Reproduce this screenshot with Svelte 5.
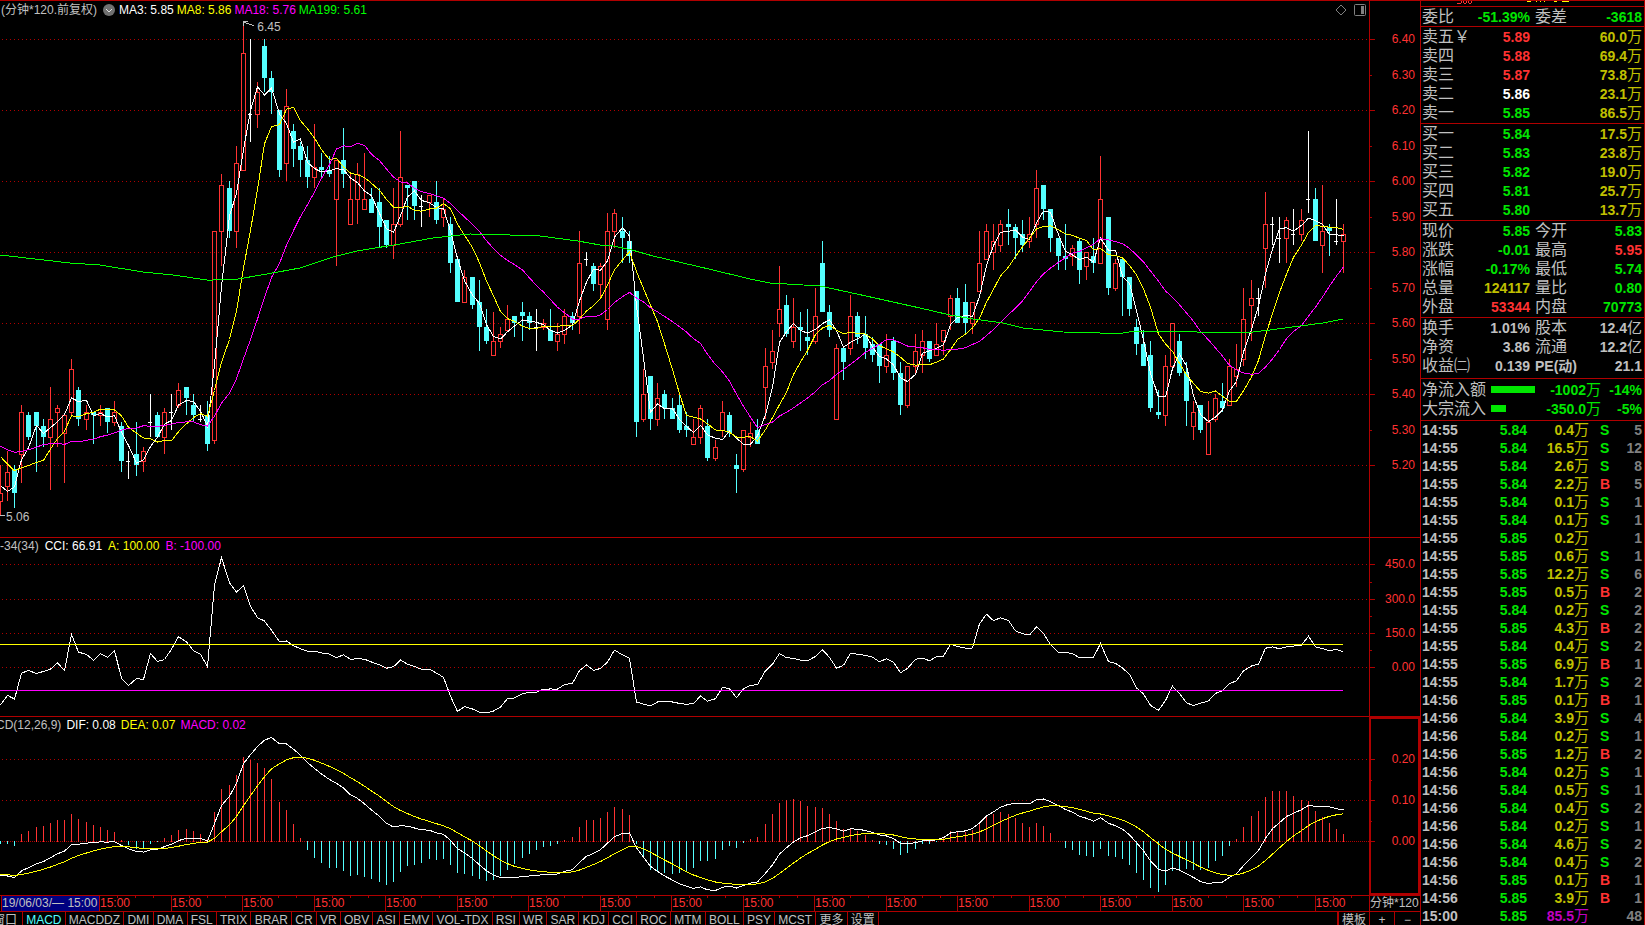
<script lang="ts">
  // open high low close, in cents, one 120-minute bar each
  const raw = `
    510 520 506 512|514 524 510 518|519 520 508 512|523 537 515 535|534 535 527 528|535 535 518 531|531 533 525 528
    528 542 513 533|535 537 525 536|529 534 515 534|535 550 534 547|541 542 531 533|533 537 530 535|535 535 526 534
    534 537 531 535|536 536 529 532|532 538 531 535|531 532 518 521|521 524 516 521|523 532 517 520|521 525 518 524
    532 540 528 532|534 535 528 528|528 536 523 535|535 540 530 535|537 543 536 541|542 542 534 539|537 540 532 534
    533 537 532 533|534 538 524 526|527 586 526 586|586 602 576 599|598 600 584 586|586 610 581 605|603 645 603 636
    619 640 611 619|619 628 615 625|638 640 625 629|629 631 619 625|620 620 601 603|605 626 600 621|614 616 604 609
    610 611 601 606|606 610 598 601|601 616 598 604|604 608 601 603|603 607 601 602|595 606 576 606|606 615 598 602
    588 602 588 595|595 605 588 602|592 608 592 595|595 598 591 591|594 598 581 587|589 589 581 582|582 598 578 588
    588 614 587 601|599 599 589 598|600 600 589 593|593 596 587 593|594 596 590 596|594 600 588 589|590 595 587 592
    588 590 574 577|578 578 566 566|566 575 566 573|573 573 564 565|566 572 552 559|559 564 554 555|551 563 551 555
    555 559 553 557|558 565 558 561|562 562 556 560|563 566 555 562|562 563 558 560|559 564 552 559|559 561 558 560
    558 564 555 555|555 560 552 557|557 564 554 562|562 563 558 560|562 586 557 577|578 580 576 578|576 577 569 571
    571 577 567 576|561 591 558 586|586 592 581 591|586 590 577 584|583 586 577 579|569 569 528 532|533 547 532 540
    545 545 530 533|533 543 531 539|540 541 533 536|536 539 533 533|537 540 529 530|531 535 528 530|526 533 526 528
    528 537 526 536|531 533 521 522|522 527 521 525|530 538 528 535|534 535 528 529|520 523 512 519|519 530 518 530
    528 532 525 529|530 533 526 526|542 553 533 548|549 558 547 552|560 576 556 564|565 568 556 557|555 567 553 559
    559 563 552 558|556 564 551 555|555 570 554 562|577 583 563 563|563 565 556 558|533 554 533 553|553 553 544 549
    553 568 551 562|562 563 554 556|557 562 550 553|554 556 549 551|554 554 543 548|548 557 546 551|555 556 544 546
    546 549 534 537|537 548 536 548|548 557 546 552|551 558 546 555|555 555 549 550|551 560 551 554|555 558 551 558
    562 568 558 567|567 570 560 560|566 571 557 560|560 566 557 566|569 586 569 577|578 588 578 586|580 588 575 583
    582 589 580 588|588 592 582 587|587 588 578 584|585 589 580 582|583 590 581 585|588 603 584 598|599 599 589 592
    592 592 580 584|584 584 575 579|579 588 575 578|579 582 576 581|583 584 571 575|576 580 572 580|579 584 574 577
    577 607 577 595|590 590 568 570|570 578 569 577|578 578 562 573|573 573 562 564|559 561 551 554|554 558 548 548
    551 555 535 536|535 541 533 534|534 551 531 548|548 560 548 560|555 557 545 546|546 549 531 538|531 538 527 535
    537 537 529 530|523 538 523 532|533 540 532 539|538 543 535 536|537 550 537 548|545 554 542 547|550 570 548 561
    565 572 555 567|567 570 562 567|581 597 570 588|588 590 582 588|584 590 577 584|584 590 577 589|585 592 582 585
    585 592 583 589|595 614 591 595|595 598 583 583|582 599 574 586|587 588 579 586|583 595 582 583|583 588 574 585`;

  const bars = raw.trim().split(/[|\n]/).map((s) => {
    const [o, h, l, c] = s.trim().split(' ').map(Number);
    return { o, h, l, c };
  });

  // closes that precede the first visible bar, needed by the averages
  const before = [535, 525, 530, 520, 518, 514, 530, 534, 539, 532, 535, 527, 528, 523, 524, 523, 508];
  const closes = [...before, ...bars.map((b) => b.c)];

  const barX = (i: number) => Math.floor(7.147 * i + 0.3);
  const priceY = (c: number) => Math.round(181 + (600 - c) * 3.55);
  const cciY = (v: number) => 667.5 - v * 0.229;
  const macdY = (v: number) => 841.5 - v * 410;

  const toPoints = (ys: number[]) => ys.map((y, i) => `${barX(i) + 0.5},${y.toFixed(1)}`).join(' ');

  function movingAverage(n: number) {
    return bars.map((_, i) => {
      const end = i + before.length + 1;
      const part = closes.slice(end - n, end);
      return part.reduce((a, b) => a + b, 0) / n;
    });
  }
  const maPoints = (n: number) => toPoints(movingAverage(n).map((v) => 181.5 + (600 - v) * 3.55));

  const ma3 = maPoints(3);
  const ma8 = maPoints(8);
  const ma18 = maPoints(18);
  const ma199 =
    '0,255 70,263 100,265 143,272 173,275 207,280 213,280 238,279 267,274 300,268 333,257 357,251 400,244 433,238 ' +
    '460,235 470,234 510,235 540,236 578,241 600,245 613,246 632,250 653,256 713,270 750,279 770,283 820,286 857,294 ' +
    '920,308 950,315 973,319 1003,323 1023,328 1063,332 1100,333 1123,333 1135,331 1167,332 1180,331 1197,332 1253,332 ' +
    '1270,330 1300,326 1323,323 1343,319';

  // the first CCI values reach further back than the bars kept here
  const cciStart = [
    -163, -122, -138, -25, -13, -26, -17, -7, 20, -13, 144, 67, 57, 32, 60, 44, 74, -47, -79, -48, -52, 61, 26, 35, 80,
    135, 112, 74, 58, 4, 360, 480, 370
  ];
  const typical = bars.map((b) => (b.h + b.l + b.c) / 3);
  const cci = bars.map((_, i) => {
    if (i < cciStart.length) return cciStart[i];
    const part = typical.slice(i - 33, i + 1);
    const mean = part.reduce((a, b) => a + b, 0) / 34;
    const dev = part.reduce((a, b) => a + Math.abs(b - mean), 0) / 34;
    return (typical[i] - mean) / (0.015 * dev);
  });
  const cciPoints = toPoints(cci.map(cciY));

  let fast = 525.9;
  let slow = 534.3;
  let signal = -8.05;
  const macd = bars.map((b, i) => {
    if (i > 0) {
      fast += ((b.c - fast) * 2) / 13;
      slow += ((b.c - slow) * 2) / 27;
      signal += ((fast - slow - signal) * 2) / 10;
    }
    const dif = (fast - slow) / 100;
    return { dif, dea: signal / 100, hist: 2 * (dif - signal / 100) };
  });
  const difPoints = toPoints(macd.map((m) => macdY(m.dif)));
  const deaPoints = toPoints(macd.map((m) => macdY(m.dea)));

  const panels = [
    {
      id: 'price', top: 1, height: 536,
      labels: Array.from({ length: 13 }, (_, k) => ({ text: ((640 - k * 10) / 100).toFixed(2), y: Math.floor(39.5 + k * 35.5), major: k % 2 === 0 })),
      minor: [] as number[]
    },
    {
      id: 'cci', top: 538, height: 178,
      labels: [
        { text: '450.0', y: 564, major: true },
        { text: '300.0', y: 599, major: true },
        { text: '150.0', y: 633, major: true },
        { text: '0.00', y: 667, major: true }
      ],
      minor: [582, 616, 650]
    },
    {
      id: 'macd', top: 717, height: 178,
      labels: [
        { text: '0.20', y: 759, major: true },
        { text: '0.10', y: 800, major: true },
        { text: '0.00', y: 841, major: true }
      ],
      minor: [780, 821]
    }
  ];

  const legends: Record<string, [string, string][]> = {
    price: [['MA3: 5.85', 'white'], ['MA8: 5.86', 'yellow'], ['MA18: 5.76', 'magenta'], ['MA199: 5.61', 'lime']],
    cci: [['CCI: 66.91', 'white'], ['A: 100.00', 'yellow'], ['B: -100.00', 'magenta']],
    macd: [['DIF: 0.08', 'white'], ['DEA: 0.07', 'yellow'], ['MACD: 0.02', 'magenta']]
  };

  const tabs = [
    'MACD', 'MACDDZ', 'DMI', 'DMA', 'FSL', 'TRIX', 'BRAR', 'CR', 'VR', 'OBV', 'ASI', 'EMV', 'VOL-TDX', 'RSI', 'WR',
    'SAR', 'KDJ', 'CCI', 'ROC', 'MTM', 'BOLL', 'PSY', 'MCST', '更多', '设置'
  ];
  let activeTab = $state('MACD');

  const asks = [
    ['卖五', '5.89', 'red', '60.0'], ['卖四', '5.88', 'red', '69.4'], ['卖三', '5.87', 'red', '73.8'],
    ['卖二', '5.86', 'white', '23.1'], ['卖一', '5.85', 'green', '86.5']
  ];
  const bids = [
    ['买一', '5.84', 'green', '17.5'], ['买二', '5.83', 'green', '23.8'], ['买三', '5.82', 'green', '19.0'],
    ['买四', '5.81', 'green', '25.7'], ['买五', '5.80', 'green', '13.7']
  ];
  const ratio = [['委比', '-51.39%', 'green', '委差', '-3618', 'green', '']];
  const quote = [
    ['现价', '5.85', 'green', '今开', '5.83', 'green', ''],
    ['涨跌', '-0.01', 'green', '最高', '5.95', 'red', ''],
    ['涨幅', '-0.17%', 'green', '最低', '5.74', 'green', ''],
    ['总量', '124117', 'gold', '量比', '0.80', 'green', ''],
    ['外盘', '53344', 'red', '内盘', '70773', 'green', '']
  ];
  const basics = [
    ['换手', '1.01%', 'grey', '股本', '12.4', 'grey', '亿'],
    ['净资', '3.86', 'grey', '流通', '12.2', 'grey', '亿'],
    ['收益㈡', '0.139', 'grey', 'PE(动)', '21.1', 'grey', '']
  ];
  const flows = [
    { name: '净流入额', bar: 44, amount: '-1002', pct: '-14%' },
    { name: '大宗流入', bar: 15, amount: '-350.0', pct: '-5%' }
  ];

  const ticks = `14:55 5.84 0.4 S 5|14:55 5.84 16.5 S 12|14:55 5.84 2.6 S 8|14:55 5.84 2.2 B 5|14:55 5.84 0.1 S 1
    14:55 5.84 0.1 S 1|14:55 5.85 0.2 - 1|14:55 5.85 0.6 S 1|14:55 5.85 12.2 S 6|14:55 5.85 0.5 B 2|14:55 5.84 0.2 S 2
    14:55 5.85 4.3 B 2|14:55 5.84 0.4 S 2|14:55 5.85 6.9 B 1|14:55 5.84 1.7 S 2|14:56 5.85 0.1 B 1|14:56 5.84 3.9 S 4
    14:56 5.84 0.2 S 1|14:56 5.85 1.2 B 2|14:56 5.84 0.2 S 1|14:56 5.84 0.5 S 1|14:56 5.84 0.4 S 2|14:56 5.84 0.2 S 1
    14:56 5.84 4.6 S 2|14:56 5.84 0.4 S 2|14:56 5.85 0.1 B 1|14:56 5.85 3.9 B 1|15:00 5.85 85.5 - 48`
    .split(/[|\n]/)
    .map((s) => s.trim().split(' '));
</script>

{#snippet pairTable(rows: string[][])}
  <table class="pairs">
    <tbody>
      {#each rows as [name, value, tone, name2, value2, tone2, unit]}
        <tr>
          <th scope="row">{name}</th>
          <td class="num {tone}">{value}</td>
          <th scope="row" class="second" class:strong={name2.startsWith('PE')}>{name2}</th>
          <td class="num {tone2}">{value2}{#if unit}<span class="unit">{unit}</span>{/if}</td>
        </tr>
      {/each}
    </tbody>
  </table>
{/snippet}

{#snippet bookTable(rows: string[][])}
  <table class="book">
    <tbody>
      {#each rows as [name, price, tone, qty]}
        <tr>
          <th scope="row">{name}{#if name === '卖五'}<span class="yen">￥</span>{/if}</th>
          <td class="num {tone}">{price}</td>
          <td class="num gold">{qty}<span class="unit">万</span></td>
        </tr>
      {/each}
    </tbody>
  </table>
{/snippet}

<div class="app">
  <main class="left">
    {#each panels as p}
      <section class="panel {p.id}">
        <div class="plot">
          <svg viewBox="0 {p.top} 1369 {p.height}" preserveAspectRatio="none" shape-rendering="crispEdges">
            {#each p.labels.filter((l) => l.major) as l}
              <line class="grid" class:zero={p.id === 'macd' && l.text === '0.00'} x1="2" x2="1369" y1={l.y + 0.5} y2={l.y + 0.5} />
            {/each}

            {#if p.id === 'price'}
              {#each bars as b, i}
                {@const x = barX(i)}
                {#if b.c > b.o}
                  <path class="up" d="M{x + 0.5} {priceY(b.h)}V{priceY(b.c)}M{x + 0.5} {priceY(b.o)}V{priceY(b.l)}" />
                  <rect class="up" x={x - 1.5} y={priceY(b.c) + 0.5} width="4" height={priceY(b.o) - priceY(b.c)} />
                {:else if b.c < b.o}
                  <path class="down" d="M{x + 0.5} {priceY(b.h)}V{priceY(b.l)}" />
                  <rect class="down-body" x={x - 2} y={priceY(b.o)} width="5" height={priceY(b.c) - priceY(b.o)} />
                {:else}
                  <path class="flat" d="M{x + 0.5} {priceY(b.h)}V{priceY(b.l)}M{x - 2} {priceY(b.c) + 0.5}H{x + 2}" />
                {/if}
              {/each}
              <polyline class="white" points={ma3} />
              <polyline class="yellow" points={ma8} />
              <polyline class="magenta" points={ma18} />
              <polyline class="lime" points={ma199} />
              <path class="mark" d="M254 25.5L244 22.5M248 21.5H243.5V26M0 515.5H5" />
            {:else if p.id === 'cci'}
              <polyline class="white" points={cciPoints} />
              <line class="yellow" x1="0" x2="1343" y1="644.5" y2="644.5" />
              <line class="magenta" x1="0" x2="1343" y1="690.5" y2="690.5" />
            {:else}
              {#each macd as m, i}
                <line class={m.hist > 0 ? 'up' : 'down'} x1={barX(i) + 0.5} x2={barX(i) + 0.5} y1={m.hist > 0 ? 842 : 841} y2={macdY(m.hist)} />
              {/each}
              <polyline class="white" points={difPoints} />
              <polyline class="yellow" points={deaPoints} />
            {/if}
          </svg>

          <div class="legend">
            {#if p.id === 'price'}
              <span>(分钟*120.前复权)</span>
              <button class="more" aria-label="指标菜单">
                <svg viewBox="0 0 12 12"><circle cx="6" cy="6" r="6" /><path d="M3 5L6 8L9 5" stroke="#e0e0e0" /></svg>
              </button>
            {:else if p.id === 'cci'}
              <span>-34(34)</span>
            {:else}
              <span class="cut">CD(12,26,9)</span>
            {/if}
            {#each legends[p.id] as [text, tone]}
              <span class="t-{tone}">{text}</span>
            {/each}
          </div>

          {#if p.id === 'price'}
            <span class="note high">6.45</span>
            <span class="note low">5.06</span>
            <div class="tools">
              <button aria-label="标记">
                <svg viewBox="0 0 12 12"><path d="M6 1L11 6L6 11L1 6Z" stroke="#808080" /></svg>
              </button>
              <button aria-label="侧栏">
                <svg viewBox="0 0 12 12"><rect x="0.5" y="0.5" width="11" height="11" rx="1" stroke="#808080" /><rect x="7" y="2" width="3" height="8" /></svg>
              </button>
            </div>
          {/if}
        </div>

        <div class="axis">
          <svg viewBox="0 {p.top} 50 {p.height}" preserveAspectRatio="none" shape-rendering="crispEdges">
            {#each p.labels as l}
              <path d="M0 {l.y + 0.5}H{l.major ? 5 : 2}" />
            {/each}
            {#each p.minor as y}
              <path d="M0 {y + 0.5}H2" />
            {/each}
          </svg>
          {#each p.labels as l}
            <span style:top="{((l.y - p.top) / p.height) * 100}%">{l.text}</span>
          {/each}
        </div>
      </section>
    {/each}

    <div class="times">
      <div class="time-cells">
        <span class="current">19/06/03/— 15:00</span>
        {#each Array(18) as _}
          <span>15:00</span>
        {/each}
      </div>
      <span class="period">分钟*120</span>
    </div>

    <nav class="tabs">
      <button class="first">窗口</button>
      <div class="tab-list">
        {#each tabs as t}
          <button class:active={t === activeTab} onclick={() => (activeTab = t)}>{t}</button>
        {/each}
      </div>
      <div class="spacer"></div>
      <button class="template">模板</button>
      <button class="zoom">+</button>
      <button class="zoom">−</button>
    </nav>
  </main>

  <aside class="side">
    <div class="title">
      <svg viewBox="0 0 222 6" shape-rendering="crispEdges">
        <path stroke="#ff3232" fill="none" d="M36 2.5H40M40.5 0V2M42.5 0V2M43 2.5H45M45.5 0V2M47.5 0V2M48 2.5H50M50.5 0V2" />
        <path stroke="#ffff00" fill="none" d="M106 0.5H110M115.5 0V1M119.5 0V1M123.5 0V1M133 0.5H136M141 0.5H148" />
      </svg>
    </div>
    {@render pairTable(ratio)}
    {@render bookTable(asks)}
    {@render bookTable(bids)}
    <div class="quote">{@render pairTable(quote)}</div>
    <div class="basics">{@render pairTable(basics)}</div>
    <table class="flows">
      <tbody>
        {#each flows as f}
          <tr>
            <th scope="row">{f.name}</th>
            <td class="gauge"><div style:width="{f.bar}px"></div></td>
            <td class="num green">{f.amount}<span class="unit">万</span></td>
            <td class="num green">{f.pct}</td>
          </tr>
        {/each}
      </tbody>
    </table>
    <table class="ticks">
      <tbody>
        {#each ticks as [time, price, amount, side, count]}
          <tr>
            <td class="time">{time}</td>
            <td class="num green">{price}</td>
            <td class="num {side === '-' && count === '48' ? 'purple' : 'gold'}">{amount}<span class="unit">万</span></td>
            <td class="side-mark {side === 'B' ? 'red' : 'green'}">{side === '-' ? '' : side}</td>
            <td class="num dim">{count}</td>
          </tr>
        {/each}
      </tbody>
    </table>
  </aside>
</div>

<style>
  :global(body) {
    margin: 0;
    background: #000;
  }

  .app {
    --line: #b00000;
    --red: #ff3232;
    --cyan: #54ffff;
    --grey: #c0c0c0;
    display: grid;
    grid-template-columns: minmax(0, 1fr) 225px;
    min-height: 100vh;
    background: #000;
    color: var(--grey);
    font-family: 'Liberation Sans', 'Noto Sans CJK SC', sans-serif;
    font-size: 12px;
  }

  button {
    margin: 0;
    padding: 0;
    border: 0;
    background: none;
    color: inherit;
    font: inherit;
    cursor: pointer;
  }

  .left {
    display: flex;
    flex-direction: column;
    min-width: 0;
  }

  /* Chart panels */
  .panel {
    display: flex;
    flex: 178 1 0;
    border-top: 1px solid var(--line);
  }

  .panel.price {
    flex-grow: 536;
  }

  .plot,
  .axis {
    position: relative;
  }

  .plot {
    flex: 1;
    min-width: 0;
    overflow: hidden;
  }

  .plot > svg,
  .axis > svg {
    position: absolute;
    inset: 0;
    width: 100%;
    height: 100%;
  }

  .axis {
    flex: 0 0 50px;
    border-left: 1px solid var(--line);
    color: var(--red);
  }

  .macd .axis {
    outline: 2px solid var(--line);
    outline-offset: -2px;
  }

  .axis path {
    stroke: var(--line);
  }

  .axis span {
    position: absolute;
    right: 5px;
    line-height: 16px;
    margin-top: -8px;
  }

  .plot polyline,
  .plot line,
  .plot path,
  .plot rect {
    fill: none;
    stroke-width: 1;
  }

  .grid {
    stroke: var(--line);
    stroke-dasharray: 1 3;
  }

  .grid.zero {
    stroke-dasharray: 1 1;
  }

  .up {
    stroke: var(--red);
  }

  .down {
    stroke: var(--cyan);
  }

  .plot .down-body {
    fill: var(--cyan);
  }

  .flat,
  .white {
    stroke: #fff;
  }

  .yellow {
    stroke: #ff0;
  }

  .magenta {
    stroke: #f0f;
  }

  .lime {
    stroke: #0f0;
  }

  .mark {
    stroke: var(--grey);
  }

  .legend {
    position: absolute;
    top: 0;
    left: 0;
    display: flex;
    align-items: center;
    gap: 5px;
    line-height: 16px;
    white-space: nowrap;
  }

  .cci .legend {
    gap: 6px;
  }

  .price .legend {
    padding-left: 1px;
    top: 1px;
    gap: 3px;
  }

  .legend .more {
    margin: 0 1px 0 3px;
  }

  .legend .cut {
    margin-left: -4px;
  }

  .t-white {
    color: #fff;
  }

  .t-yellow {
    color: #ff0;
  }

  .t-magenta {
    color: #f0f;
  }

  .t-lime {
    color: #0f0;
  }

  .more svg,
  .tools svg {
    display: block;
    width: 12px;
    height: 12px;
  }

  .more circle {
    fill: #707070;
  }

  .tools {
    position: absolute;
    top: 3px;
    right: 3px;
    display: flex;
    gap: 7px;
  }

  .tools rect:last-child {
    fill: #808080;
  }

  .note {
    position: absolute;
    line-height: 16px;
  }

  .note.high {
    left: 18.8%;
    top: 18px;
  }

  .note.low {
    left: 6px;
    bottom: 12px;
  }

  /* Time scale */
  .times {
    display: flex;
    height: 15px;
    border-top: 1px solid var(--line);
    line-height: 15px;
    color: var(--red);
  }

  .time-cells {
    flex: 1;
    min-width: 0;
    display: grid;
    grid-template-columns: 198fr repeat(17, 143fr) 109fr;
  }

  .time-cells span {
    border-left: 1px solid var(--line);
    background: repeating-linear-gradient(90deg, transparent 0 17px, var(--line) 17px 18px) top / 100% 2px no-repeat;
    white-space: nowrap;
  }

  .time-cells .current {
    margin-left: 1px;
    background: #000080;
    color: var(--grey);
  }

  .period {
    flex: 0 0 50px;
    border-left: 1px solid var(--line);
    color: var(--grey);
    white-space: nowrap;
  }

  /* Indicator tabs */
  .tabs {
    display: flex;
    height: 13px;
    border-top: 1px solid var(--line);
    overflow: hidden;
  }

  .tab-list {
    display: flex;
    flex: 0 0 856px;
  }

  .tabs button {
    flex: none;
    height: 16px;
    padding: 0 3px;
    border-right: 1px solid var(--line);
    line-height: 16px;
    white-space: nowrap;
  }

  .tab-list button {
    flex: 1 0 auto;
  }

  .tabs .first {
    width: 23px;
    display: flex;
    justify-content: flex-end;
    padding-right: 5px;
    box-sizing: border-box;
  }

  .tabs .active {
    color: var(--cyan);
  }

  .tabs .spacer {
    flex: 1;
  }

  .tabs .template {
    border-left: 2px solid var(--line);
  }

  .tabs .zoom {
    width: 25px;
    box-sizing: border-box;
  }

  .tabs .zoom:last-child {
    border-right: 0;
  }

  /* Quote side */
  .side {
    border: 1px solid var(--line);
    border-bottom: 0;
    min-width: 0;
    font-size: 14px;
  }

  .title {
    height: 5px;
    overflow: hidden;
  }

  .title svg {
    display: block;
    height: 6px;
  }

  table {
    width: 100%;
    border-collapse: separate;
    border-spacing: 0;
    border-top: 1px solid var(--line);
    table-layout: fixed;
  }

  th,
  td {
    height: 19px;
    padding: 0;
    line-height: 18px;
    white-space: nowrap;
    vertical-align: middle;
  }

  th {
    padding-left: 1px;
    font-size: 16px;
    font-weight: 400;
    text-align: left;
  }

  .unit {
    font-size: 15px;
    font-weight: 400;
    line-height: 0;
  }

  .num {
    font-weight: 700;
    text-align: right;
  }

  .num:last-child {
    padding-right: 2px;
  }

  .book,
  .quote :global(table) {
    padding-bottom: 1px;
  }

  .basics :global(table) {
    padding-bottom: 3px;
  }

  .pairs th {
    width: 48px;
  }

  .pairs th:first-child {
    width: 47px;
  }

  .pairs td:nth-child(2) {
    width: 61px;
  }

  .pairs .second {
    padding-left: 5px;
  }

  .pairs .strong {
    font-size: 14px;
    font-weight: 700;
  }

  .book th {
    width: 59px;
  }

  .book td:nth-child(2) {
    width: 49px;
  }

  .flows {
    padding: 1px 0 2px;
  }

  .flows th {
    width: 67px;
  }

  .flows .gauge {
    width: 48px;
    padding-left: 2px;
  }

  .flows .gauge div {
    height: 7px;
    background: #00e600;
  }

  .flows td:nth-child(3) {
    width: 62px;
  }

  .ticks td {
    height: 18px;
  }

  .ticks .time {
    width: 41px;
    padding-left: 1px;
    font-weight: 700;
  }

  .ticks td:nth-child(2) {
    width: 64px;
  }

  .ticks td:nth-child(3) {
    width: 62px;
  }

  .ticks .side-mark {
    width: 21px;
    padding-left: 11px;
    font-weight: 700;
  }

  .red {
    color: var(--red);
  }

  .green {
    color: #00e600;
  }

  .gold {
    color: #c0c000;
  }

  .purple {
    color: #c000c0;
  }

  td.white {
    color: #fff;
  }

  .dim {
    color: #808080;
  }
</style>
